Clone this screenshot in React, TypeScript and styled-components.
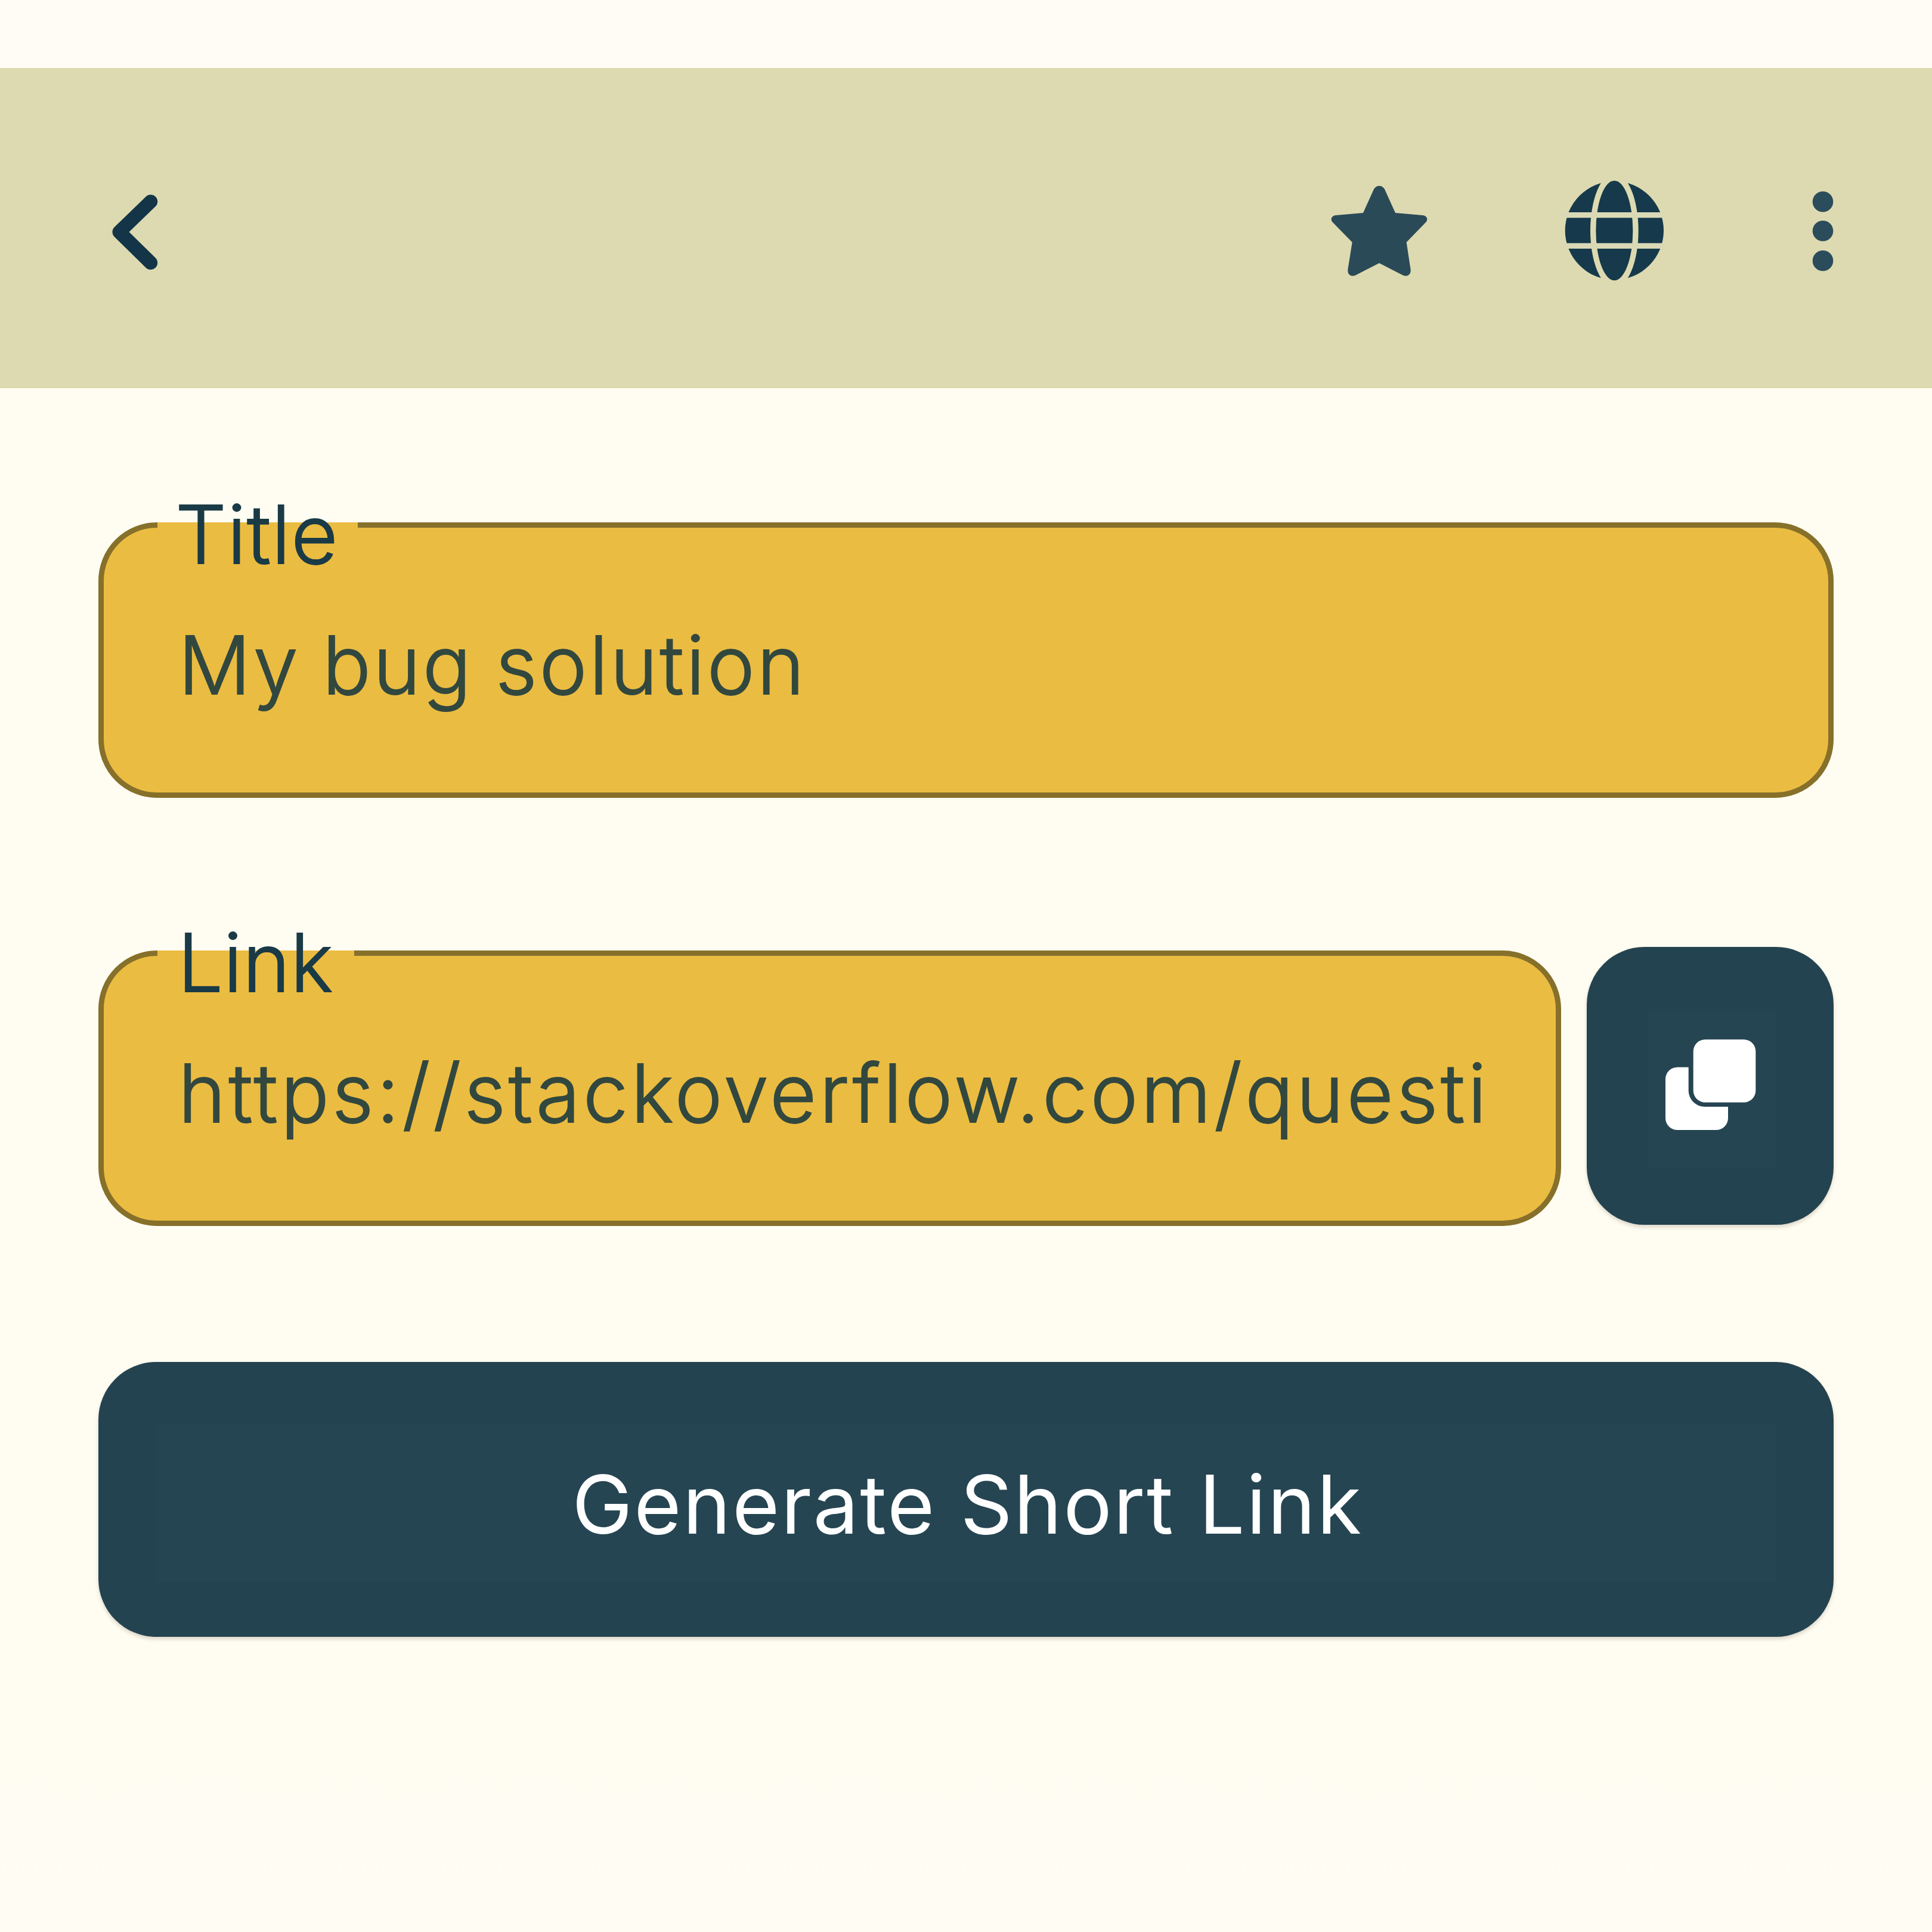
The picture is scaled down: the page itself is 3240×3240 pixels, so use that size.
import React from "react";
import styled, { createGlobalStyle } from "styled-components";

const GlobalStyle = createGlobalStyle`
  * { box-sizing: border-box; }
  html, body { margin: 0; background: #fffdf3; }
  button { appearance: none; border: 0; background: none; padding: 0; margin: 0; font: inherit; color: inherit; }
`;

const Screen = styled.div`
  width: 3240px;
  height: 3240px;
  overflow: hidden;
  display: flex;
  flex-direction: column;
  background: linear-gradient(#fffcf5 0 114px, #fffdf1 114px 2800px, #fffcf4 3240px);
  font-family: Inter, "Noto Sans", sans-serif;
  font-size: 136px;
  line-height: 164px;
  color: #163a4b;
`;

const AppBar = styled.header`
  margin-top: 114px;
  height: 537px;
  flex: none;
  display: flex;
  align-items: center;
  justify-content: space-between;
  padding: 7px 153px 0 165px;
  background: #dddab1;
`;

const Actions = styled.div`
  display: flex;
  align-items: center;
  padding-top: 8px;
`;

const IconButton = styled.button<{ $width: number; $gap?: number }>`
  display: flex;
  width: ${(p) => p.$width}px;
  height: 240px;
  margin-left: ${(p) => p.$gap ?? 0}px;
`;

const Icon = styled.svg`
  display: block;
  width: 100%;
  height: 100%;
  flex: none;
`;

const Form = styled.main`
  display: flex;
  flex-direction: column;
  padding: 225px 165px 0;
`;

const LinkRow = styled.div`
  display: flex;
  align-items: flex-end;
  gap: 43px;
  margin-top: 250px;
`;

const Field = styled.label<{ $grow?: boolean }>`
  position: relative;
  display: flex;
  flex: ${(p) => (p.$grow ? "1 1 0" : "none")};
  min-width: 0;
  height: 462px;
  padding: 148px 100px 0 125px;
  border: 9px solid #86702a;
  border-radius: 98px;
  background: #ebbc42;
  font-size: 135px;
  font-weight: 300;
`;

const Notch = styled.span<{ $width: number }>`
  position: absolute;
  left: 90px;
  top: -9px;
  width: ${(p) => p.$width}px;
  height: 9px;
  background: #ebbc42;
`;

const LabelText = styled.span<{ $left: number; $spacing: number }>`
  position: absolute;
  left: ${(p) => p.$left}px;
  top: -62px;
  white-space: nowrap;
  color: #1a3a46;
  letter-spacing: ${(p) => p.$spacing}px;
  -webkit-text-stroke: 1.8px #1a3a46;
`;

const Value = styled.span<{ $spacing: number }>`
  white-space: nowrap;
  letter-spacing: ${(p) => p.$spacing}px;
  word-spacing: -4.5px;
  color: #32483f;
  -webkit-text-stroke: 1.8px #32483f;
`;

const FilledButton = styled.button<{ $width?: number; $height: number; $margin: string; $inset: string }>`
  display: flex;
  flex: none;
  width: ${(p) => (p.$width ? p.$width + "px" : "100%")};
  height: ${(p) => p.$height}px;
  margin: ${(p) => p.$margin};
  padding: ${(p) => p.$inset};
  border-radius: 97px;
  background: #244350;
  box-shadow: 0 4px 6px rgba(60, 40, 30, 0.18);
  color: #fff;
`;

const ButtonFace = styled.span`
  flex: 1;
  height: 100%;
  display: flex;
  align-items: center;
  justify-content: center;
  background: #264552;
`;

const ButtonLabel = styled.span`
  padding: 3px 0 0 5px;
  letter-spacing: 2.5px;
`;

const BackIcon = () => (
  <Icon viewBox="165 266 240 240" fill="none">
    <path d="M252.7 338 L200 389 L252.7 440.7" stroke="#133547" strokeWidth="23" strokeLinecap="round" strokeLinejoin="round" />
  </Icon>
);

const StarIcon = () => (
  <Icon viewBox="0 0 720 720">
    <path
      fill="#2b4a57"
      d="M339 125 C351 125 360 131 366 142 L420 261 L557 273 C580 275 587 295 572 310 L476 409 L497 547 C499 573 480 584 459 575 L339 514 L219 575 C198 584 179 573 181 547 L203 409 L106 310 C91 295 98 275 121 273 L258 261 L312 142 C318 131 327 125 339 125 Z"
    />
  </Icon>
);

const GlobeIcon = () => (
  <Icon viewBox="0 0 720 720">
    <circle cx="352" cy="350" r="248" fill="#163a4b" />
    <ellipse cx="352" cy="350" rx="121" ry="288" fill="#dddab1" />
    <ellipse cx="352" cy="350" rx="93" ry="251" fill="#163a4b" />
    <path d="M90 272 H614 M90 427 H614" stroke="#dad9b6" strokeWidth="28" />
  </Icon>
);

const MoreIcon = () => (
  <Icon viewBox="0 0 60 240" fill="#2b4c5b">
    <circle cx="30" cy="68.3" r="17.3" />
    <circle cx="30" cy="117.3" r="17.3" />
    <circle cx="30" cy="167.3" r="17.3" />
  </Icon>
);

const CopyGlyph = styled.svg`
  display: block;
  width: 152px;
  height: 152px;
  flex: none;
  margin: 0 5px 12px 0;
`;

const CopyIcon = () => (
  <CopyGlyph viewBox="0 0 152 152" fill="#fff">
    <rect x="46.7" y="0.2" width="104.6" height="105.6" rx="20" />
    <path d="M20 46.7 H38.7 V86 A27 27 0 0 0 65.7 113 H105 V132 A20 20 0 0 1 85 152 H20 A20 20 0 0 1 0 132 V66.7 A20 20 0 0 1 20 46.7 Z" />
  </CopyGlyph>
);

export default function App() {
  return (
    <>
      <GlobalStyle />
      <Screen>
        <AppBar>
          <IconButton $width={240} aria-label="Back"><BackIcon /></IconButton>
          <Actions>
            <IconButton $width={240} aria-label="Favourite"><StarIcon /></IconButton>
            <IconButton $width={240} $gap={150} aria-label="Open in browser"><GlobeIcon /></IconButton>
            <IconButton $width={60} $gap={197} aria-label="More"><MoreIcon /></IconButton>
          </Actions>
        </AppBar>
        <Form>
          <Field>
            <Notch $width={336}><LabelText $left={30} $spacing={1.3}>Title</LabelText></Notch>
            <Value $spacing={3.7}>My bug solution</Value>
          </Field>
          <LinkRow>
            <Field $grow>
              <Notch $width={330}><LabelText $left={34} $spacing={0.6}>Link</LabelText></Notch>
              <Value $spacing={4.9}>https://stackoverflow.com/questi</Value>
            </Field>
            <FilledButton $width={414} $height={466} $margin="0 0 2px" $inset="104px 96px 96px 102px" aria-label="Copy">
              <ButtonFace><CopyIcon /></ButtonFace>
            </FilledButton>
          </LinkRow>
          <FilledButton $height={461} $margin="228px 0 0" $inset="105px 96px 91px">
            <ButtonFace><ButtonLabel>Generate Short Link</ButtonLabel></ButtonFace>
          </FilledButton>
        </Form>
      </Screen>
    </>
  );
}
